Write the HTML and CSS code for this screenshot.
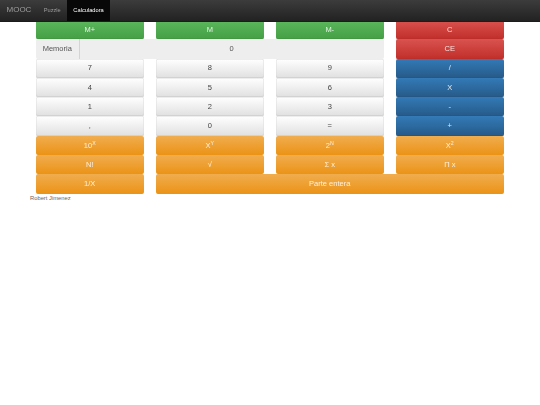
FILE: index.html
```html
<!DOCTYPE html>
<html lang="es">
<head>
  <meta charset="UTF-8">
  <title>Calculadora</title>
  <link rel="stylesheet" href="styles.css">
</head>
<body>
  <nav class="navbar">
    <span class="brand">MOOC</span>
    <a class="nav-link" href="#">Puzzle</a>
    <a class="nav-link active" href="#">Calculadora</a>
  </nav>

  <div class="teclado">
    <button class="btn verde">M+</button>
    <button class="btn verde">M</button>
    <button class="btn verde">M-</button>
    <button class="btn rojo">C</button>

    <div class="memoria">
      <span class="memoria-label">Memoria</span>
      <span class="memoria-valor">0</span>
    </div>
    <button class="btn rojo">CE</button>

    <button class="btn gris">7</button>
    <button class="btn gris">8</button>
    <button class="btn gris">9</button>
    <button class="btn azul">/</button>

    <button class="btn gris">4</button>
    <button class="btn gris">5</button>
    <button class="btn gris">6</button>
    <button class="btn azul">X</button>

    <button class="btn gris">1</button>
    <button class="btn gris">2</button>
    <button class="btn gris">3</button>
    <button class="btn azul">-</button>

    <button class="btn gris">,</button>
    <button class="btn gris">0</button>
    <button class="btn gris">=</button>
    <button class="btn azul">+</button>

    <button class="btn naranja">10<sup>X</sup></button>
    <button class="btn naranja">X<sup>Y</sup></button>
    <button class="btn naranja">2<sup>N</sup></button>
    <button class="btn naranja">X<sup>2</sup></button>

    <button class="btn naranja">N!</button>
    <button class="btn naranja">√</button>
    <button class="btn naranja">Σ x</button>
    <button class="btn naranja">Π x</button>

    <button class="btn naranja">1/X</button>
    <button class="btn naranja ancho">Parte entera</button>
  </div>

  <p class="autor">Robert Jimenez</p>
</body>
</html>
```

FILE: styles.css
```css
* {
  margin: 0;
  padding: 0;
  box-sizing: border-box;
}

body {
  font-family: "Liberation Sans", Arial, sans-serif;
  background: #fff;
  color: #333;
}

/* barra superior */
.navbar {
  position: relative;
  z-index: 2;
  height: 21.5px;
  display: flex;
  align-items: stretch;
  padding-left: 6.5px;
  background: linear-gradient(to bottom, #3c3c3c, #222);
  border-bottom: 1px solid #1c1c1c;
  will-change: transform;
}

.brand {
  font-size: 8px;
  line-height: 20px;
  color: #9d9d9d;
  margin-right: 6px;
}

.nav-link {
  font-size: 5.7px;
  line-height: 20px;
  padding: 0 6.3px;
  color: #9d9d9d;
  text-decoration: none;
}

.nav-link.active {
  color: #fff;
  background: #080808;
}

/* teclado */
.teclado {
  display: grid;
  grid-template-columns: repeat(4, 107.5px);
  grid-auto-rows: 19.3px;
  column-gap: 12.5px;
  padding-left: 36px;
  margin-top: -1.5px;
  will-change: transform;
}

.btn {
  font-family: inherit;
  font-size: 7.5px;
  line-height: 1;
  border: none;
  border-radius: 2px;
  color: rgba(255, 255, 255, 0.85);
  cursor: pointer;
}

.btn sup {
  font-size: 5.2px;
  line-height: 0;
}

.verde {
  background: linear-gradient(to bottom, #5cb85c, #45a045);
  box-shadow: inset 0 -0.5px 0 #3e8f3e;
}

.rojo {
  background: linear-gradient(to bottom, #d9534f, #c12e2a);
  box-shadow: inset 0 -0.5px 0 #b92c28;
}

.azul {
  background: linear-gradient(to bottom, #337ab7, #265a88);
  box-shadow: inset 0 -0.5px 0 #245580;
}

.naranja {
  background: linear-gradient(to bottom, #f0ad4e, #eb9316);
}

.gris {
  color: #444;
  background: linear-gradient(to bottom, #fff, #e0e0e0);
  box-shadow: inset 0 0 0 0.5px #dcdcdc, inset 0 -1px 0 #c8c8c8;
}

.ancho {
  grid-column: span 3;
}

/* fila de memoria */
.memoria {
  grid-column: span 3;
  display: flex;
  font-size: 7.5px;
  color: #555;
  background: #eee;
  border-radius: 2px;
}

.memoria-label {
  width: 43.5px;
  display: flex;
  align-items: center;
  justify-content: center;
  border-right: 0.5px solid #d4d4d4;
}

.memoria-valor {
  flex: 1;
  display: flex;
  align-items: center;
  justify-content: center;
}

.autor {
  font-size: 5.8px;
  color: #666;
  margin: 1.5px 0 0 30px;
}
```
